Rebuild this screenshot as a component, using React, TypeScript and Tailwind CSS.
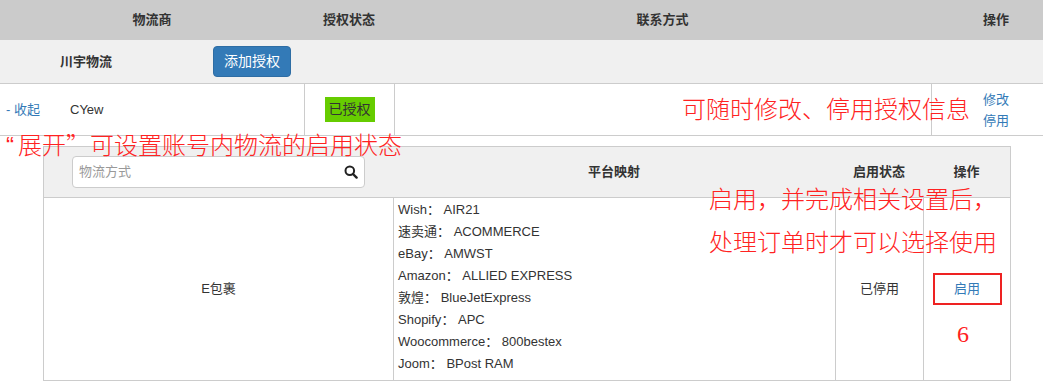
import React from "react";

const font = { fontFamily: '"Liberation Sans", "Noto Sans CJK SC", Arial, sans-serif' };
const annoFont = { fontFamily: '"Noto Sans CJK SC", sans-serif' };
const anno = 'absolute leading-none text-[#f22] text-[24px] whitespace-nowrap font-light';

const mapping: [string, string][] = [
  ["Wish", "AIR21"],
  ["速卖通", "ACOMMERCE"],
  ["eBay", "AMWST"],
  ["Amazon", "ALLIED EXPRESS"],
  ["敦煌", "BlueJetExpress"],
  ["Shopify", "APC"],
  ["Woocommerce", "800bestex"],
  ["Joom", "BPost RAM"],
];

export default function App() {
  return (
    <div className="relative w-[1043px] h-[382px] overflow-hidden bg-white text-[13px] text-[#333]" style={font}>
      {/* header */}
      <div className="grid grid-cols-[304px_90px_537px_1fr] h-[40px] bg-[#cbcbcb] font-bold items-center">
        <div className="text-center">物流商</div>
        <div className="text-center">授权状态</div>
        <div className="text-center">联系方式</div>
        <div className="pl-[52px]">操作</div>
      </div>
      {/* carrier row */}
      <div className="flex items-center h-[44px] bg-[#f0f0f0] border-b border-[#ccc]">
        <div className="w-[213px] pl-[60px] font-bold">川宇物流</div>
        <button className="w-[78px] h-[31px] rounded bg-[#337ab7] text-white text-[14px] border border-[#2e6da4]">添加授权</button>
      </div>
      {/* account row */}
      <div className="grid grid-cols-[304px_90px_537px_1fr] h-[52px] border-b border-[#ccc]">
        <div className="flex items-center">
          <span className="pl-[6px] text-[#337ab7] w-[70px]">- 收起</span>
          <span>CYew</span>
        </div>
        <div className="border-l border-[#ccc] flex items-center justify-center">
          <span className="bg-[#66cc00] px-[4px] h-[25px] flex items-center text-[#333] text-[14px]">已授权</span>
        </div>
        <div className="border-l border-[#ccc]"></div>
        <div className="border-l border-[#ccc] flex flex-col justify-center pl-[51px] text-[#337ab7] leading-[21px]">
          <span>修改</span>
          <span>停用</span>
        </div>
      </div>

      {/* inner table */}
      <div className="ml-[43px] mt-[10px] w-[968px] border-l border-r border-t border-[#ccc]">
        <div className="grid grid-cols-[349px_442px_88px_1fr] h-[51px] bg-[#f0f0f0] border-b border-[#ccc] items-center font-bold">
          <div className="px-[28px]">
            <div className="h-[32px] w-[293px] bg-white border border-[#ccc] rounded flex items-center pl-[6px] pr-[6px] font-normal">
              <span className="flex-1 text-[#999]">物流方式</span>
              <svg width="14" height="14" viewBox="0 0 14 14" fill="none">
                <circle cx="5.8" cy="5.8" r="4.3" stroke="#222" strokeWidth="2" />
                <path d="M9 9 L12.6 12.6" stroke="#222" strokeWidth="2.4" strokeLinecap="round" />
              </svg>
            </div>
          </div>
          <div className="text-center">平台映射</div>
          <div className="text-center">启用状态</div>
          <div className="text-center">操作</div>
        </div>
        <div className="grid grid-cols-[349px_442px_88px_1fr] h-[183px] border-b border-[#ccc]">
          <div className="flex items-center justify-center">E包裹</div>
          <div className="border-l border-[#ccc] pl-[4px] pt-[1px] leading-[22px]">
            {mapping.map(([k, v]) => (
              <div key={k}>
                {k}：&nbsp;{v}
              </div>
            ))}
          </div>
          <div className="border-l border-[#ccc] flex items-center justify-center">已停用</div>
          <div className="border-l border-[#ccc] flex items-center justify-center">
            <span className="w-[69px] h-[32px] border-2 border-[#ee2222] flex items-center justify-center text-[#337ab7]">启用</span>
          </div>
        </div>
      </div>

      {/* annotations */}
      <div className={`${anno} left-[682px] top-[96px]`} style={annoFont}>可随时修改、停用授权信息</div>
      <div className={`${anno} left-[6px] top-[132px]`} style={annoFont}>
        <span className="mr-[4px]" style={{ fontFamily: '"Liberation Sans", sans-serif' }}>“</span>展开”可设置账号内物流的启用状态
      </div>
      <div className={`${anno} left-[709px] top-[186px]`} style={annoFont}>启用，并完成相关设置后，</div>
      <div className={`${anno} left-[709px] top-[229px]`} style={annoFont}>处理订单时才可以选择使用</div>
      <div
        className="absolute leading-none text-[#f22] text-[24px] left-[957px] top-[322px]"
        style={{ fontFamily: '"Liberation Serif", serif' }}
      >
        6
      </div>
    </div>
  );
}
